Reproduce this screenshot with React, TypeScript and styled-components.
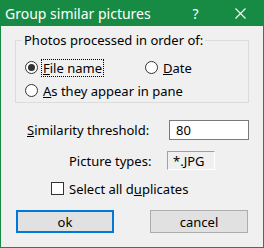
import React from "react";
import styled, {createGlobalStyle} from "styled-components";

const GlobalStyle = createGlobalStyle`
  html, body {
    margin: 0;
    padding: 0;
    background: #ffffff;
  }
  body {
    font-family: "Noto Sans", "DejaVu Sans", sans-serif;
    font-size: 13px;
    color: #000000;
  }
`;

const Frame = styled.div`
  width: 264px;
  height: 248px;
  box-sizing: border-box;
  background: #178b43;
  padding: 0 1px 1px 1px;
  display: flex;
  flex-direction: column;
`;

const TitleBar = styled.div`
  height: 26px;
  display: flex;
  align-items: center;
  color: #ffffff;
  padding-left: 4px;
`;

const TitleText = styled.span`
  flex: 1;
  font-size: 14px;
`;

const TitleButton = styled.div`
  width: 45px;
  height: 26px;
  display: flex;
  align-items: center;
  justify-content: center;
  font-size: 14px;
`;

const Body = styled.div`
  flex: 1;
  background: #f0f0f0;
  display: flex;
  flex-direction: column;
`;

const GroupBox = styled.fieldset`
  margin: 6px 0 0 14px;
  width: 234px;
  box-sizing: border-box;
  border: 1px solid #dcdcdc;
  padding: 8px 0 0 6px;
  min-width: 0;
`;

const Legend = styled.legend`
  padding: 0 2px;
  line-height: 16px;
`;

const RadioRow = styled.div`
  height: 23px;
  display: flex;
  align-items: center;
  padding-left: 3px;
`;

const RadioItem = styled.label<{ $width?: number }>`
  display: flex;
  align-items: center;
  gap: 4px;
  width: ${(p) => (p.$width ? `${p.$width}px` : "auto")};
`;

const RadioCircle = styled.span<{ $checked?: boolean }>`
  width: 13px;
  height: 13px;
  box-sizing: border-box;
  border: 1px solid #333333;
  border-radius: 50%;
  background: #ffffff;
  display: flex;
  align-items: center;
  justify-content: center;
  &::after {
    content: "";
    width: 7px;
    height: 7px;
    border-radius: 50%;
    background: ${(p) => (p.$checked ? "#333333" : "transparent")};
  }
`;

const Caption = styled.span<{ $focused?: boolean }>`
  padding: 0 1px;
  line-height: 16px;
  outline: ${(p) => (p.$focused ? "1px dotted #000000" : "none")};
`;

const FieldRow = styled.div<{ $top: number; $indent: number; $height: number }>`
  margin-top: ${(p) => p.$top}px;
  padding-left: ${(p) => p.$indent}px;
  height: ${(p) => p.$height}px;
  display: flex;
  align-items: center;
`;

const FieldLabel = styled.span<{ $width: number }>`
  width: ${(p) => p.$width}px;
`;

const TextInput = styled.div`
  width: 80px;
  height: 20px;
  box-sizing: border-box;
  border: 1px solid #7a7a7a;
  background: #ffffff;
  padding-left: 6px;
  display: flex;
  align-items: center;
`;

const StaticBox = styled.div`
  width: 48px;
  height: 19px;
  box-sizing: border-box;
  border: 1px solid;
  border-color: #a0a0a0 #ffffff #ffffff #a0a0a0;
  padding-left: 5px;
  display: flex;
  align-items: center;
`;

const CheckBox = styled.span`
  width: 13px;
  height: 13px;
  box-sizing: border-box;
  border: 1px solid #333333;
  background: #ffffff;
  margin-right: 5px;
`;

const ButtonRow = styled.div`
  margin-top: 13px;
  padding-left: 15px;
  display: flex;
  gap: 36px;
`;

const Button = styled.button<{ $default?: boolean }>`
  width: 98px;
  height: 23px;
  box-sizing: border-box;
  margin: 0;
  padding: 0;
  font: inherit;
  color: #000000;
  background: #e1e1e1;
  border: ${(p) => (p.$default ? "2px solid #0078d7" : "1px solid #adadad")};
`;

const CloseIcon = () => (
  <svg width="11" height="11" viewBox="0 0 11 11">
    <path d="M0.5 0.5 L10.5 10.5 M10.5 0.5 L0.5 10.5" stroke="#ffffff" strokeWidth="1.1" fill="none" />
  </svg>
);

export default function App() {
  return (
    <>
      <GlobalStyle />
      <Frame>
        <TitleBar>
          <TitleText>Group similar pictures</TitleText>
          <TitleButton>?</TitleButton>
          <TitleButton>
            <CloseIcon />
          </TitleButton>
        </TitleBar>
        <Body>
          <GroupBox>
            <Legend>Photos processed in order of:</Legend>
            <RadioRow>
              <RadioItem $width={120}>
                <RadioCircle $checked />
                <Caption $focused>
                  <u>F</u>ile name
                </Caption>
              </RadioItem>
              <RadioItem>
                <RadioCircle />
                <Caption>
                  <u>D</u>ate
                </Caption>
              </RadioItem>
            </RadioRow>
            <RadioRow>
              <RadioItem>
                <RadioCircle />
                <Caption>
                  <u>A</u>s they appear in pane
                </Caption>
              </RadioItem>
            </RadioRow>
          </GroupBox>
          <FieldRow $top={17} $indent={26} $height={20}>
            <FieldLabel $width={142}>
              <u>S</u>imilarity threshold:
            </FieldLabel>
            <TextInput>80</TextInput>
          </FieldRow>
          <FieldRow $top={11} $indent={68} $height={19}>
            <FieldLabel $width={98}>Picture types:</FieldLabel>
            <StaticBox>*.JPG</StaticBox>
          </FieldRow>
          <FieldRow $top={10} $indent={50} $height={17}>
            <CheckBox />
            <span>
              Select all d<u>u</u>plicates
            </span>
          </FieldRow>
          <ButtonRow>
            <Button $default>ok</Button>
            <Button>cancel</Button>
          </ButtonRow>
        </Body>
      </Frame>
    </>
  );
}
